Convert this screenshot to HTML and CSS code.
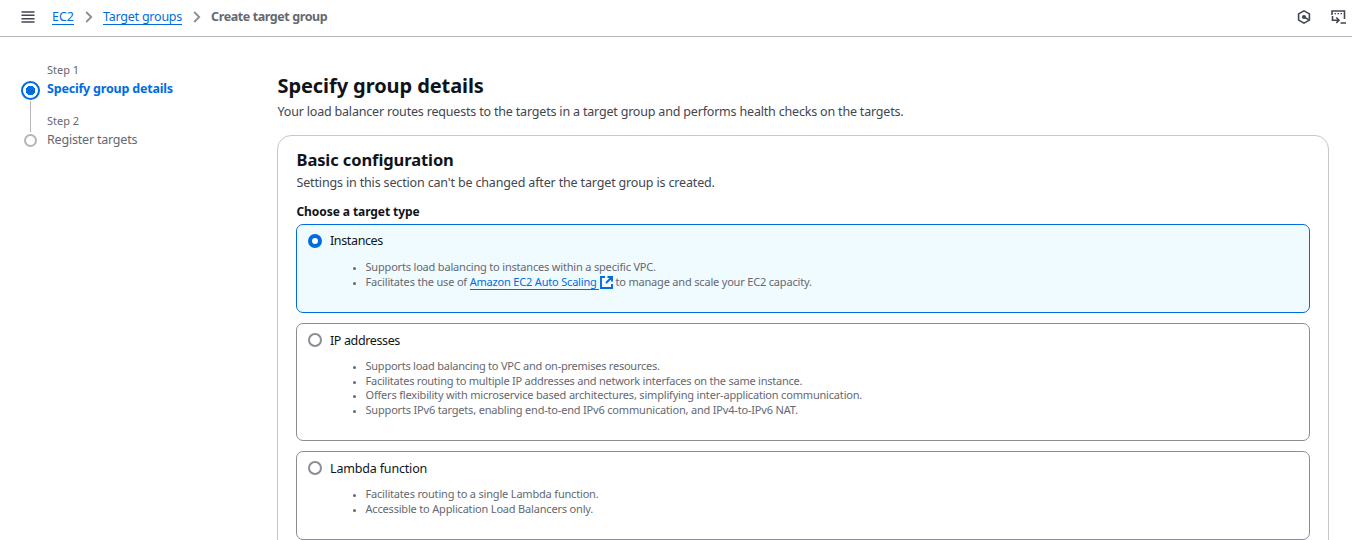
FILE: index.html
```html
<!DOCTYPE html>
<html lang="en">
<head>
<meta charset="utf-8">
<title>Create target group</title>
<link rel="stylesheet" href="styles.css">
</head>
<body>
<header class="topbar">
  <svg class="menu-icon" width="14" height="12" viewBox="0 0 14 12"><path d="M.5 1h13M.5 4.3h13M.5 7.7h13M.5 11h13"/></svg>
  <nav class="crumbs">
    <a class="crumb-ec2" href="#">EC2</a>
    <svg class="chevron" width="8" height="12" viewBox="0 0 8 12"><path d="M1.2 1l5 5-5 5"/></svg>
    <a class="crumb-groups" href="#">Target groups</a>
    <svg class="chevron" width="8" height="12" viewBox="0 0 8 12"><path d="M1.2 1l5 5-5 5"/></svg>
    <span class="current">Create target group</span>
  </nav>
  <div class="tools">
    <svg width="14" height="14" viewBox="0 0 14 14"><path d="M7 .9l5.4 3v6.2L7 13.1l-5.4-3V3.9z"/><circle class="solid" cx="7" cy="7" r="2.1"/><path d="M7 7l4.6 2.6"/></svg>
    <svg width="15" height="14" viewBox="0 0 15 14"><path d="M1 5V1h12.500v8M1.500 6v4.200h6M5.300 7.500L8 10.200l-2.700 2.700M9.500 13H15"/><path class="dots" d="M3.500 3.600h1.500M6.500 3.600h1.500M9.500 3.600H11"/></svg>
  </div>
</header>
<div class="layout">
  <aside class="steps">
    <div class="step">
      <div class="rail"><span class="dot dot-on"></span><span class="line"></span></div>
      <div class="step-text"><div class="step-no">Step 1</div><div class="step-name active">Specify group details</div></div>
    </div>
    <div class="step">
      <div class="rail"><span class="dot"></span></div>
      <div class="step-text"><div class="step-no">Step 2</div><div class="step-name">Register targets</div></div>
    </div>
  </aside>
  <main class="content">
    <h1>Specify group details</h1>
    <p class="lead">Your load balancer routes requests to the targets in a target group and performs health checks on the targets.</p>
    <section class="card">
      <h2>Basic configuration</h2>
      <p class="hint">Settings in this section can't be changed after the target group is created.</p>
      <div class="field-label">Choose a target type</div>
      <div class="tiles">
        <div class="tile selected">
          <div class="tile-head"><span class="radio"></span><span class="name">Instances</span></div>
          <ul>
            <li><span>Supports load balancing to instances within a specific VPC.</span></li>
            <li><span>Facilitates the use of <a href="#">Amazon EC2 Auto Scaling </a><svg class="ext" width="13" height="13" viewBox="0 0 13 13"><path d="M5 1H1v11h11V8M7.500 1H12v4.500M12 1L6 7"/></svg> to manage and scale your EC2 capacity.</span></li>
          </ul>
        </div>
        <div class="tile tall">
          <div class="tile-head"><span class="radio"></span><span class="name low">IP addresses</span></div>
          <ul>
            <li class="tight"><span>Supports load balancing to VPC and on-premises resources.</span></li>
            <li class="tight"><span>Facilitates routing to multiple IP addresses and network interfaces on the same instance.</span></li>
            <li><span>Offers flexibility with microservice based architectures, simplifying inter-application communication.</span></li>
            <li><span>Supports IPv6 targets, enabling end-to-end IPv6 communication, and IPv4-to-IPv6 NAT.</span></li>
          </ul>
        </div>
        <div class="tile">
          <div class="tile-head"><span class="radio"></span><span class="name wide low">Lambda function</span></div>
          <ul>
            <li><span>Facilitates routing to a single Lambda function.</span></li>
            <li><span>Accessible to Application Load Balancers only.</span></li>
          </ul>
        </div>
      </div>
    </section>
  </main>
</div>
</body>
</html>
```
FILE: styles.css
```css
* { box-sizing: border-box; }
html { overflow: hidden; }
body { margin: 0; height: 540px; overflow: hidden; background: #fff; color: #0f141a; font-family: "Noto Sans", sans-serif; font-size: 12.5px; line-height: 18px; }
h1, h2, p, ul { margin: 0; }
a { color: #006ce0; text-decoration: none; border-bottom: 1px solid #006ce0; }
svg { fill: none; flex: none; }
.topbar { display: flex; align-items: center; height: 37px; padding: 0 6px 3px 21px; border-bottom: 1px solid #b4b4bb; }
.menu-icon { stroke: #424650; stroke-width: 1.500; }
.crumbs { display: flex; align-items: center; margin-left: 17px; white-space: nowrap; line-height: 15px; }
.crumb-groups { letter-spacing: -.23px; }
.chevron { stroke: #8c8c94; stroke-width: 1.800; margin: 0 10px 0 11px; }
.current { color: #656871; font-weight: 700; letter-spacing: -.41px; }
.tools { display: flex; gap: 20px; margin: 0 0 0 auto; stroke: #424650; stroke-width: 1.600; }
.tools .solid { fill: #424650; stroke: none; }
.tools .dots { stroke-width: 1.200; }
.layout { display: flex; height: 503px; overflow: hidden; }
.steps { width: 277px; padding: 24px 0 0 21px; }
.step { display: flex; height: 51px; }
.rail { width: 19px; display: flex; flex-direction: column; align-items: center; padding-top: 20px; }
.dot { flex: none; width: 13px; height: 13px; margin-top: 2px; border: 2px solid #b4b4bb; border-radius: 50%; }
.dot-on { width: 19px; height: 19px; margin-top: 0; border-color: #006ce0; background: radial-gradient(circle, #006ce0 4.500px, #fff 5px); }
.line { flex: none; width: 1px; height: 31px; margin-top: 1px; background: #b4b4bb; }
.step-text { margin-left: 7px; white-space: nowrap; color: #656871; }
.step-no { font-size: 11px; line-height: 18px; }
.step-name { line-height: 19px; letter-spacing: -.2px; }
.active { color: #006ce0; font-weight: 700; }
.content { width: 1052px; padding-top: 36px; white-space: nowrap; }
h1 { font-size: 20px; line-height: 26px; letter-spacing: -.08px; padding-left: .5px; }
.lead { line-height: 18px; margin-top: 4px; padding-left: .5px; color: #424650; letter-spacing: -.185px; }
.card { height: 460px; margin-top: 14px; padding: 13px 18px; border: 1px solid #c6c6cd; border-radius: 14px; }
h2 { font-size: 16.500px; line-height: 22px; letter-spacing: -.09px; padding-left: .5px; }
.hint { margin-top: 3px; padding-left: .5px; color: #424650; letter-spacing: -.155px; }
.field-label { margin-top: 11px; padding-left: .5px; font-size: 12px; font-weight: 700; letter-spacing: -.08px; }
.tiles { display: grid; gap: 10px; margin-top: 3px; }
.tile { height: 89px; padding: 7px 11px; border: 1px solid #8c8c94; border-radius: 7px; }
.tall { height: 118px; }
.selected { border-color: #006ce0; background: #f0fbff; }
.tile-head { display: flex; align-items: center; gap: 8px; height: 18px; }
.name { letter-spacing: -.37px; }
.low { padding-top: 2px; }
.wide { letter-spacing: -.17px; }
.radio { width: 14px; height: 14px; border: 2px solid #8c8c94; border-radius: 50%; background: #fff; }
.selected .radio { border: 4px solid #006ce0; }
ul { margin-top: 10px; padding: 0 0 0 45px; list-style: none; color: #656871; font-size: 11px; line-height: 14.700px; letter-spacing: -.185px; }
li { display: flex; align-items: center; gap: 9.500px; height: 14.700px; }
li::before { content: ""; width: 3px; height: 3px; margin-top: 2px; border-radius: 50%; background: #656871; }
.tight { letter-spacing: -.235px; }
.ext { stroke: #006ce0; stroke-width: 1.900; vertical-align: -3px; margin-left: .5px; }
```
